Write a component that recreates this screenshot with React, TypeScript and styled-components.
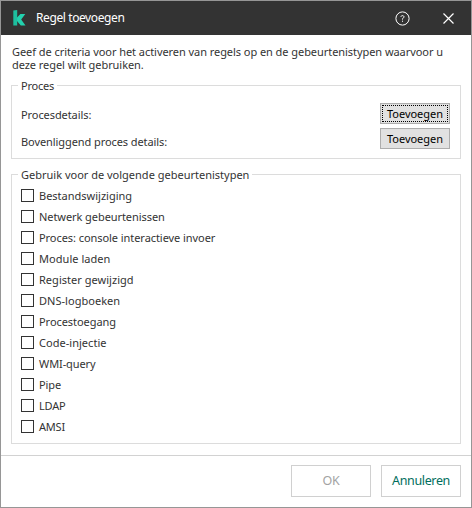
import React from "react";
import styled, { createGlobalStyle } from "styled-components";

const GlobalStyle = createGlobalStyle`
  * { box-sizing: border-box; }
  body { margin: 0; background: #fff; }
  button { font-family: inherit; padding: 0; border-radius: 0; }
`;

const Dialog = styled.main`
  width: 472px;
  height: 508px;
  display: flex;
  flex-direction: column;
  border: 1px solid #969696;
  background: #fff;
  color: #333;
  font: 11px/13px "Noto Sans", "Open Sans", sans-serif;
  white-space: nowrap;
`;

const TitleBar = styled.header`
  height: 34px;
  flex: none;
  display: flex;
  align-items: center;
  padding: 0 17px 0 12px;
  background: #333;
  color: #fff;
`;

const Title = styled.h1`
  margin: 0 auto 0 10px;
  font-size: 12px;
  line-height: 16px;
  font-weight: 400;
  letter-spacing: -0.4px;
`;

const TitleButton = styled.button`
  display: flex;
  border: 0;
  background: none;
  color: #fff;
  & + & { margin-left: 33px; }
`;

const Content = styled.div`
  height: 420px;
  flex: none;
  padding: 10px 10px 0;
`;

const Intro = styled.p`
  margin: 0 0 0 1px;
  height: 40px;
  letter-spacing: -0.055px;
`;

const Group = styled.section<{ $height: number }>`
  height: ${(p) => p.$height}px;
  border: 1px solid #dcdcdc;
  padding: 0 10px 0 9px;
  & + & { margin-top: 15px; }
`;

const Legend = styled.h2<{ $tracking?: number }>`
  width: fit-content;
  height: 13px;
  margin: -7px 0 0 -3px;
  padding: 0 3px;
  background: #fff;
  font: inherit;
  letter-spacing: ${(p) => p.$tracking ?? 0}px;
`;

const DetailRow = styled.div`
  height: 21px;
  display: flex;
  align-items: center;
  justify-content: space-between;
  margin-top: 4px;
  ${Legend} + & { margin-top: 11px; }
`;

const DetailLabel = styled.span<{ $drop: number }>`
  padding-top: ${(p) => p.$drop * 2}px;
  letter-spacing: -0.08px;
`;

const AddButton = styled.button<{ $focused?: boolean }>`
  width: 70px;
  height: 21px;
  border: 1px solid #adadad;
  background: #e1e1e1;
  color: #000;
  font-size: 11px;
  line-height: 13px;
  outline: ${(p) => (p.$focused ? "1px dotted #000" : "none")};
  outline-offset: -3px;
`;

const EventList = styled.div`
  display: grid;
  grid-auto-rows: 13px;
  row-gap: 8px;
  margin-top: 8px;
`;

const Option = styled.label<{ $tracking: number }>`
  display: flex;
  align-items: center;
  gap: 5px;
  letter-spacing: ${(p) => p.$tracking}px;
`;

const Checkbox = styled.input.attrs({ type: "checkbox" })`
  appearance: none;
  width: 13px;
  height: 13px;
  margin: 0;
  border: 1px solid #333;
  background: #fff;
`;

const Footer = styled.footer`
  flex: 1;
  display: flex;
  justify-content: flex-end;
  gap: 10px;
  padding: 9px 10px 0;
  border-top: 1px solid #d2d2d2;
`;

const ActionButton = styled.button`
  width: 80px;
  height: 32px;
  border: 1px solid #d0d0d0;
  background: #fff;
  color: #006d5c;
  font-size: 12.5px;
  line-height: 18px;
  letter-spacing: -0.35px;
  &:disabled { color: #a3a3a3; }
`;

const events = [
  { name: "Bestandswijziging", tracking: 0 },
  { name: "Netwerk gebeurtenissen", tracking: -0.07 },
  { name: "Proces: console interactieve invoer", tracking: -0.06 },
  { name: "Module laden", tracking: 0.05 },
  { name: "Register gewijzigd", tracking: 0.03 },
  { name: "DNS-logboeken", tracking: 0.03 },
  { name: "Procestoegang", tracking: -0.05 },
  { name: "Code-injectie", tracking: 0.03 },
  { name: "WMI-query", tracking: -0.1 },
  { name: "Pipe", tracking: -0.1 },
  { name: "LDAP", tracking: -0.2 },
  { name: "AMSI", tracking: -0.2 },
];

const Logo = () => (
  <svg width="13" height="16" viewBox="0 0 13 16" fill="#23d1ae">
    <path d="M4 7.6L7.4 4h4.9L8.2 9.4l4.3 6.1H7.8L4 11z" />
    <path d="M.3.6L4.2 0v15.5H.3z" fill="#1dbf9f" />
  </svg>
);

const HelpIcon = () => (
  <svg width="15" height="15" viewBox="0 0 15 15" fill="none" stroke="currentColor">
    <circle cx="7.5" cy="7.5" r="6.6" />
    <path d="M6.1 5.9V5.3Q6.4 4.6 7.5 4.6T9 5.7Q9 6.4 8.2 7T7.5 8.6M7.5 9.7v1.1" />
  </svg>
);

const CloseIcon = () => (
  <svg width="11" height="11" viewBox="0 0 11 11" fill="none" stroke="currentColor">
    <path d="M.5 .5l10 10M10.5 .5l-10 10" strokeWidth="1.2" />
  </svg>
);

export default function App() {
  return (
    <>
      <GlobalStyle />
      <Dialog>
        <TitleBar>
          <Logo />
          <Title>Regel toevoegen</Title>
          <TitleButton aria-label="Help"><HelpIcon /></TitleButton>
          <TitleButton aria-label="Sluiten"><CloseIcon /></TitleButton>
        </TitleBar>
        <Content>
          <Intro>
            Geef de criteria voor het activeren van regels op en de gebeurtenistypen waarvoor u
            <br />
            deze regel wilt gebruiken.
          </Intro>
          <Group $height={74}>
            <Legend $tracking={-0.2}>Proces</Legend>
            <DetailRow>
              <DetailLabel $drop={1}>Procesdetails:</DetailLabel>
              <AddButton $focused>Toevoegen</AddButton>
            </DetailRow>
            <DetailRow>
              <DetailLabel $drop={3}>Bovenliggend proces details:</DetailLabel>
              <AddButton>Toevoegen</AddButton>
            </DetailRow>
          </Group>
          <Group $height={270}>
            <Legend>Gebruik voor de volgende gebeurtenistypen</Legend>
            <EventList>
              {events.map(({ name, tracking }) => (
                <Option key={name} $tracking={tracking}>
                  <Checkbox />
                  {name}
                </Option>
              ))}
            </EventList>
          </Group>
        </Content>
        <Footer>
          <ActionButton disabled>OK</ActionButton>
          <ActionButton>Annuleren</ActionButton>
        </Footer>
      </Dialog>
    </>
  );
}
